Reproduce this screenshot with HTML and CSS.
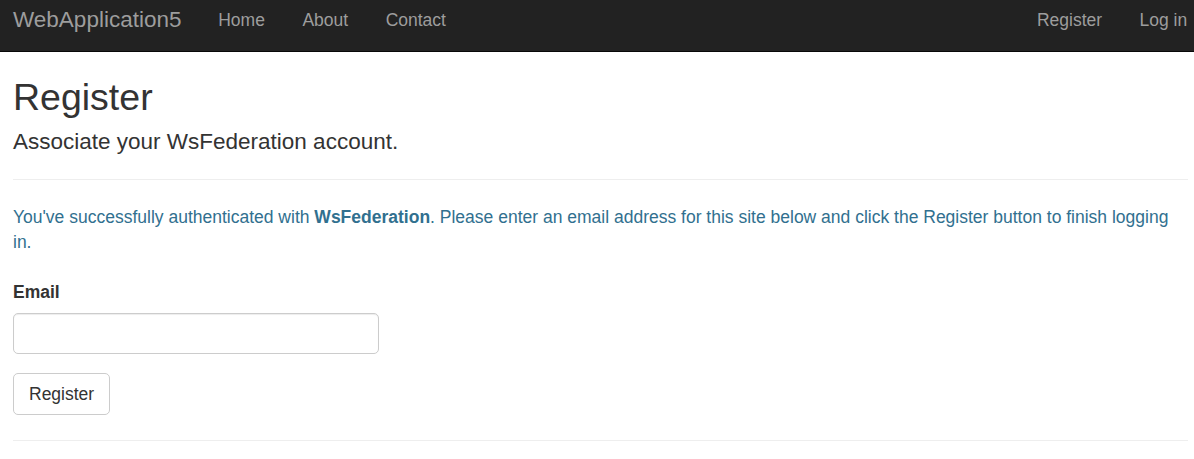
FILE: index.html
```html
<!DOCTYPE html>
<html lang="en">
<head>
<meta charset="utf-8">
<title>Register - WebApplication5</title>
<link rel="stylesheet" href="styles.css">
</head>
<body>
<nav class="navbar">
  <a class="brand" href="#">WebApplication5</a>
  <ul class="nav">
    <li><a href="#">Home</a></li>
    <li><a href="#">About</a></li>
    <li><a href="#">Contact</a></li>
  </ul>
  <ul class="nav nav-right">
    <li><a href="#">Register</a></li>
    <li><a href="#">Log in</a></li>
  </ul>
</nav>
<main class="content">
  <h2 class="title">Register</h2>
  <h4 class="subtitle">Associate your WsFederation account.</h4>
  <hr class="rule">
  <p class="text-info">You've successfully authenticated with <strong>WsFederation</strong>. Please enter an email address for this site below and click the Register button to finish logging in.</p>
  <form class="form">
    <div class="form-group">
      <label class="label" for="email">Email</label>
      <input class="form-control" id="email" type="email">
    </div>
    <button class="btn" type="button">Register</button>
  </form>
  <hr class="rule rule-bottom">
</main>
</body>
</html>
```
FILE: styles.css
```css
* { box-sizing: border-box; }
html, body { margin: 0; padding: 0; }
body {
  font-family: "Liberation Sans", Arial, Helvetica, sans-serif;
  font-size: 17.5px;
  line-height: 25px;
  color: #333;
  background: #fff;
}
.navbar {
  display: flex;
  align-items: flex-start;
  height: 52px;
  background: #222;
  border-bottom: 1px solid #080808;
  overflow: hidden;
}
.brand {
  display: block;
  padding: 7px 18px 0 13px;
  font-size: 22.5px;
  line-height: 25px;
  color: #9d9d9d;
  text-decoration: none;
}
.nav {
  display: flex;
  list-style: none;
  margin: 0;
  padding: 0;
}
.nav a {
  display: block;
  padding: 8px 18.75px 0;
  font-size: 17.5px;
  line-height: 25px;
  color: #9d9d9d;
  text-decoration: none;
}
.nav-right {
  margin-left: auto;
  margin-right: -12px;
}
.content {
  padding: 0 6px 0 13px;
}
.title {
  margin: 25px 0 11px;
  font-size: 37.5px;
  line-height: 41px;
  font-weight: 500;
}
.subtitle {
  margin: 0;
  font-size: 22.5px;
  line-height: 25px;
  font-weight: 500;
}
.rule {
  margin: 25px 0 25px;
  border: 0;
  border-top: 1px solid #eee;
  height: 0;
}
.text-info {
  margin: 0 0 25px;
  color: #31708f;
}
.form { margin: 0; }
.form-group { margin-bottom: 19px; }
.label {
  display: block;
  margin-bottom: 8px;
  font-weight: bold;
}
.form-control {
  display: block;
  width: 366px;
  height: 41px;
  padding: 7px 15px;
  font: inherit;
  color: #555;
  background: #fff;
  border: 1px solid #ccc;
  border-radius: 5px;
  box-shadow: inset 0 1px 1px rgba(0,0,0,.075);
}
.btn {
  display: block;
  height: 42px;
  padding: 7.5px 15px;
  font: inherit;
  color: #333;
  background: #fff;
  border: 1px solid #ccc;
  border-radius: 5px;
}
.rule-bottom { margin-top: 25px; }
```
